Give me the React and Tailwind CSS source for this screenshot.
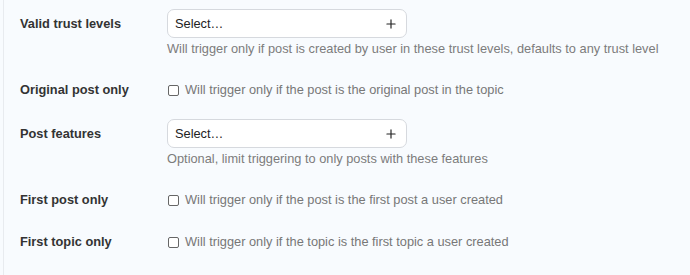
import { Plus } from 'lucide-react';

const font = { fontFamily: '"Liberation Sans", Arial, sans-serif' };

function SelectBox() {
  return (
    <div className="w-[240px] h-[29px] bg-white border border-[#d6d9de] rounded-[7px] flex items-center justify-between pl-[7px] pr-[8px]">
      <span className="text-[12.8px] text-[#222]">Select…</span>
      <Plus size={14} strokeWidth={2} className="text-[#222]" />
    </div>
  );
}

function Checkbox({ text }) {
  return (
    <label className="flex items-center text-[12.8px] text-[#777]">
      <span className="w-[11px] h-[11px] border border-[#666] rounded-[2px] bg-white mr-[6px] ml-[1px]" />
      {text}
    </label>
  );
}

function Label({ children }) {
  return <div className="w-[147px] shrink-0 text-[12.8px] font-bold text-[#333]">{children}</div>;
}

export default function App() {
  return (
    <div className="w-[690px] h-[275px] bg-[#f8fbfe] overflow-hidden" style={font}>
      <div className="ml-[3px] h-full border-l border-[#e8ebef] pl-[16px] pt-[9px]">
        {/* Valid trust levels */}
        <div className="flex">
          <Label><div className="h-[29px] flex items-center">Valid trust levels</div></Label>
          <div>
            <SelectBox />
            <p className="mt-[3px] text-[12.8px] leading-[16px] text-[#7c7c7c]">
              Will trigger only if post is created by user in these trust levels, defaults to any trust level
            </p>
          </div>
        </div>

        <div className="flex items-center mt-[24px] h-[18px]">
          <Label>Original post only</Label>
          <Checkbox text="Will trigger only if the post is the original post in the topic" />
        </div>

        <div className="flex mt-[20px]">
          <Label><div className="h-[29px] flex items-center">Post features</div></Label>
          <div>
            <SelectBox />
            <p className="mt-[3px] text-[12.8px] leading-[16px] text-[#7c7c7c]">
              Optional, limit triggering to only posts with these features
            </p>
          </div>
        </div>

        <div className="flex items-center mt-[24px] h-[18px]">
          <Label>First post only</Label>
          <Checkbox text="Will trigger only if the post is the first post a user created" />
        </div>

        <div className="flex items-center mt-[24px] h-[18px]">
          <Label>First topic only</Label>
          <Checkbox text="Will trigger only if the topic is the first topic a user created" />
        </div>
      </div>
    </div>
  );
}
